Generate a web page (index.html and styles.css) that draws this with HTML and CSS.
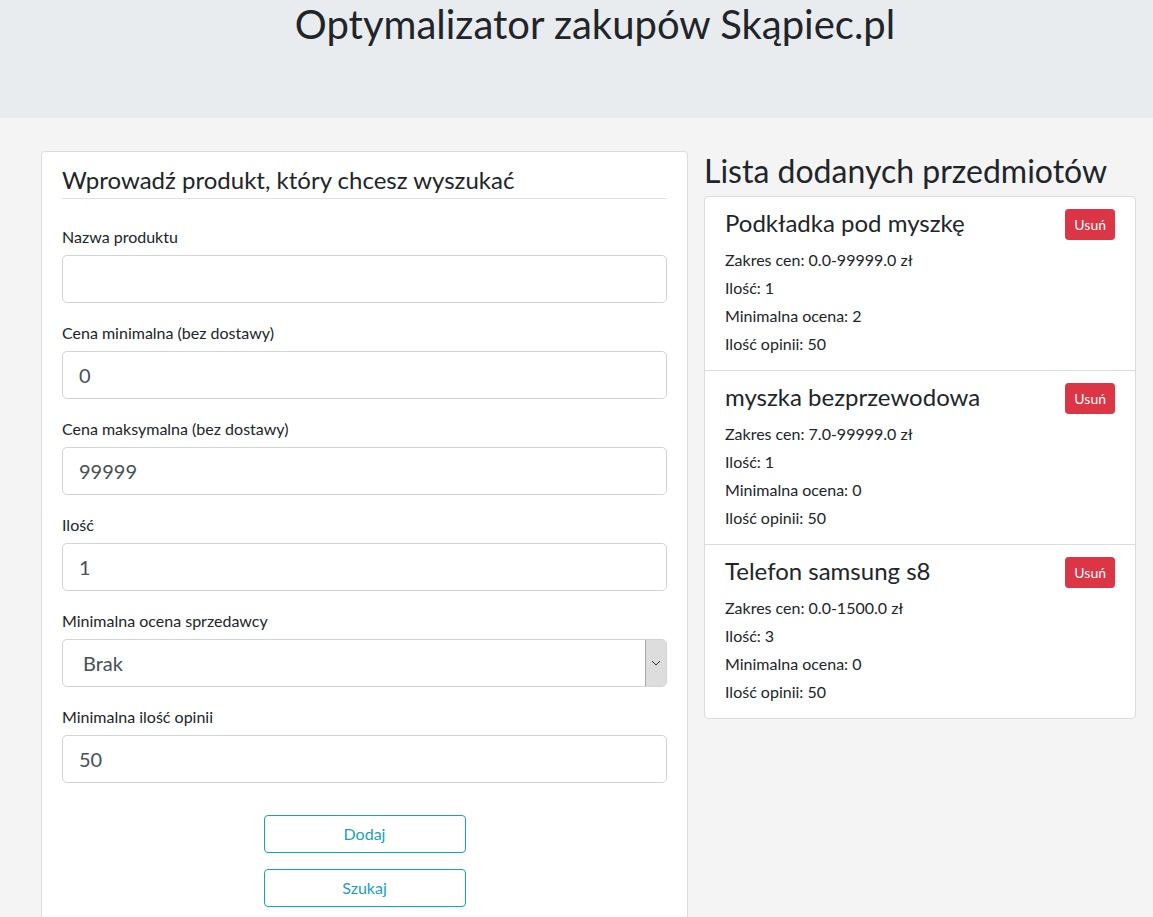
FILE: index.html
```html
<!DOCTYPE html>
<html lang="pl">
<head>
<meta charset="utf-8">
<title>Optymalizator zakupów Skąpiec.pl</title>
<link rel="stylesheet" href="styles.css">
</head>
<body>
<header class="hero">
  <h1 class="hero-title">Optymalizator zakupów Skąpiec.pl</h1>
</header>
<main class="layout">
  <section class="form-card">
    <h4 class="form-title">Wprowadź produkt, który chcesz wyszukać</h4>
    <div class="group">
      <label class="label">Nazwa produktu</label>
      <input class="field" type="text" value="">
    </div>
    <div class="group">
      <label class="label">Cena minimalna (bez dostawy)</label>
      <input class="field" type="text" value="0">
    </div>
    <div class="group">
      <label class="label">Cena maksymalna (bez dostawy)</label>
      <input class="field" type="text" value="99999">
    </div>
    <div class="group">
      <label class="label">Ilość</label>
      <input class="field" type="text" value="1">
    </div>
    <div class="group">
      <label class="label">Minimalna ocena sprzedawcy</label>
      <div class="select">
        <span class="select-value">Brak</span>
        <span class="select-arrow">
          <svg width="10" height="6" viewBox="0 0 10 6"><path d="M1 1 L5 5 L9 1" fill="none" stroke="#333" stroke-width="1"/></svg>
        </span>
      </div>
    </div>
    <div class="group">
      <label class="label">Minimalna ilość opinii</label>
      <input class="field" type="text" value="50">
    </div>
    <div class="actions">
      <button class="btn-outline">Dodaj</button>
      <button class="btn-outline">Szukaj</button>
    </div>
  </section>
  <section class="list-col">
    <h2 class="list-title">Lista dodanych przedmiotów</h2>
    <div class="list-group">
      <div class="item">
        <div class="item-head">
          <h4 class="item-name">Podkładka pod myszkę</h4>
          <button class="btn-danger">Usuń</button>
        </div>
        <p class="info">Zakres cen: 0.0-99999.0 zł</p>
        <p class="info">Ilość: 1</p>
        <p class="info">Minimalna ocena: 2</p>
        <p class="info">Ilość opinii: 50</p>
      </div>
      <div class="item">
        <div class="item-head">
          <h4 class="item-name">myszka bezprzewodowa</h4>
          <button class="btn-danger">Usuń</button>
        </div>
        <p class="info">Zakres cen: 7.0-99999.0 zł</p>
        <p class="info">Ilość: 1</p>
        <p class="info">Minimalna ocena: 0</p>
        <p class="info">Ilość opinii: 50</p>
      </div>
      <div class="item">
        <div class="item-head">
          <h4 class="item-name">Telefon samsung s8</h4>
          <button class="btn-danger">Usuń</button>
        </div>
        <p class="info">Zakres cen: 0.0-1500.0 zł</p>
        <p class="info">Ilość: 3</p>
        <p class="info">Minimalna ocena: 0</p>
        <p class="info">Ilość opinii: 50</p>
      </div>
    </div>
  </section>
</main>
</body>
</html>
```
FILE: styles.css
```css
* { box-sizing: border-box; }
html, body { margin: 0; padding: 0; }
body {
  background: #f4f4f4;
  font-family: Lato, "Open Sans", sans-serif;
  font-size: 16px;
  line-height: 1.5;
  color: #212529;
}
.hero {
  background: #e9ecef;
  height: 118px;
  padding: 0 0 0 37px;
}
.hero-title {
  margin: 0;
  text-align: center;
  font-size: 40px;
  font-weight: 400;
  line-height: 1.2;
}
.layout {
  display: flex;
  align-items: flex-start;
  gap: 16px;
  padding: 33px 17px 0 41px;
}
.form-card {
  width: 647px;
  flex: none;
  background: #fff;
  border: 1px solid #dcdcdc;
  border-radius: 4px;
  padding: 14px 20px 20px 20px;
}
.form-title {
  margin: 0 0 26px 0;
  padding-bottom: 3px;
  border-bottom: 1px solid #e2e2e2;
  font-size: 24px;
  font-weight: 400;
  line-height: 1.2;
}
.group { margin-bottom: 18px; }
.label {
  display: block;
  font-size: 16px;
  line-height: 24px;
  margin-bottom: 6px;
}
.field, .select {
  display: block;
  width: 100%;
  height: 48px;
  border: 1px solid #ced4da;
  border-radius: 4.8px;
  background: #fff;
  font-family: inherit;
  font-size: 20px;
  color: #495057;
  padding: 0 16px;
  outline: none;
}
.select {
  display: flex;
  align-items: stretch;
  padding: 0;
  overflow: hidden;
}
.select-value {
  flex: 1;
  padding-left: 20px;
  line-height: 46px;
}
.select-arrow {
  width: 21px;
  flex: none;
  background: #dddddd;
  border-left: 1px solid #a5a5a5;
  display: flex;
  align-items: center;
  justify-content: center;
}
.actions {
  display: flex;
  flex-direction: column;
  align-items: center;
  gap: 16px;
  margin-top: 32px;
}
.btn-outline {
  width: 202px;
  height: 38px;
  border: 1px solid #17a2b8;
  border-radius: 4px;
  background: transparent;
  color: #17a2b8;
  font-family: inherit;
  font-size: 16px;
}
.list-col {
  width: 432px;
  flex: none;
}
.list-title {
  margin: 1px 0 6px 0;
  font-size: 32px;
  font-weight: 400;
  line-height: 1.2;
}
.list-group {
  background: #fff;
  border: 1px solid #dcdcdc;
  border-radius: 4px;
}
.item {
  padding: 12px 20px;
  border-bottom: 1px solid #dcdcdc;
}
.item:last-child { border-bottom: none; }
.item-head {
  display: flex;
  justify-content: space-between;
  align-items: flex-start;
  height: 28.8px;
  margin-bottom: 10px;
}
.item-name {
  margin: 0;
  font-size: 24px;
  font-weight: 400;
  line-height: 1.2;
}
.btn-danger {
  background: #dc3545;
  color: #fff;
  border: 1px solid #dc3545;
  border-radius: 3.2px;
  font-family: inherit;
  font-size: 14px;
  line-height: 21px;
  padding: 4px 8px;
}
.info {
  margin: 0 0 4px 0;
  font-size: 16px;
  line-height: 24px;
}
.info:last-child { margin-bottom: 2px; }
```
